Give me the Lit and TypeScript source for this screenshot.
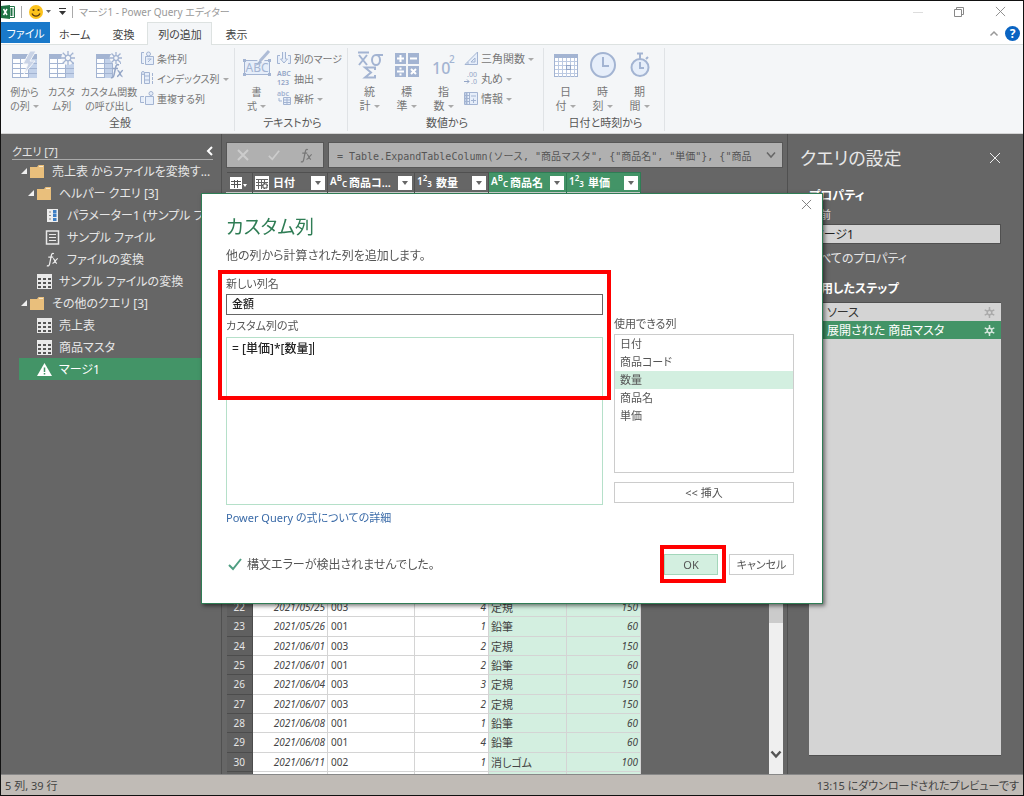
import { LitElement, html, svg, css } from "lit";
import { customElement } from "lit/decorators.js";
import { classMap } from "lit/directives/class-map.js";

const base = css`
  * { box-sizing: border-box; }
  button, input, textarea, select { font: inherit; color: inherit; margin: 0; border-radius: 0; outline: none; }
  button { background: none; border: 0; padding: 0; text-align: inherit; }
  svg { display: block; flex: none; overflow: visible; }
  a { text-decoration: none; }
`;

/* ---------- shared glyphs ---------- */
const cross = (size: number, color: string, w = 1) => html`
  <svg width=${size} height=${size} viewBox="0 0 12 12" fill="none" stroke=${color} stroke-width=${w}>
    <path d="M1 1 11 11M11 1 1 11" />
  </svg>`;
const check = (size: number, color: string, w = 2) => html`
  <svg width=${size} height=${size} viewBox="0 0 14 14" fill="none" stroke=${color} stroke-width=${w}>
    <path d="M1 8 5 12 13 2" />
  </svg>`;
const fx = (size: number, color: string) => html`
  <svg width=${size} height=${size} viewBox="0 0 16 16" fill="none" stroke=${color} stroke-width="1.3">
    <path d="M9.5 1.8C7.6.9 6.9 2.5 6.5 5L5 12.5C4.600 14.800 3.500 15.300 2 14.500M3.500 5.500H8.800" />
    <path d="M8.500 7C10.500 6.500 10.700 12.500 12.800 12.200M13.700 7C12 6.500 10 12.500 8 12.200" />
  </svg>`;

/* ---------- ribbon artwork ---------- */
const L = "#a3b4d2";
const F = "#e6eefa";
const sheet = (extra: unknown) => html`
  <svg width="30" height="30" viewBox="0 0 30 30">
    <rect x="2.500" y="5.500" width="24" height="22" fill="#fdfeff" stroke=${L} />
    <rect x="2" y="4" width="25" height="5" fill=${L} />
    <rect x="19" y="9" width="8" height="19" fill="#c3d2ea" />
    <path d="M3 13.500H27M3 18.500H27M3 23.500H27M10.500 9V28M18.500 9V28" stroke=${L} fill="none" />
    ${extra}
  </svg>`;
const burst = (x: number, y: number, r: number) => svg`
  <g transform="translate(${x} ${y})" stroke="#f4f6f9" stroke-width="4" fill="#f4f6f9"><circle r=${r * 0.7} /></g>
  <g transform="translate(${x} ${y})" stroke=${L} stroke-width="1.300" fill="#f4f6f9">
    <path d=${`M0 ${-r}V${r}M${-r} 0H${r}M${-r * 0.75} ${-r * 0.75}L${r * 0.75} ${r * 0.75}M${r * 0.75} ${-r * 0.75}L${-r * 0.75} ${r * 0.75}`} />
    <circle r=${r * 0.4} />
  </g>`;
const icons: Record<string, unknown> = {
  example: sheet(svg`<path d="M20 1 13 14H18L14 24 25 11H20L26 1Z" fill="#c9d3e6" stroke="#f4f6f9" />`),
  custom: sheet(burst(21, 8, 7)),
  invoke: html`
    <svg width="30" height="30" viewBox="0 0 30 30">
      <rect x="2.500" y="5.500" width="24" height="22" fill="#fdfeff" stroke=${L} />
      <rect x="2" y="4" width="25" height="5" fill=${L} />
      <rect x="10" y="9" width="8" height="19" fill="#c3d2ea" />
      <path d="M3 13.500H18M3 18.500H18M3 23.500H18M10.500 9V28M18.500 9V28" stroke=${L} fill="none" />
      <rect x="19" y="14" width="11" height="16" fill="#f4f6f9" />
      ${burst(22, 8, 6)}
      <g fill="none" stroke="#93a5c6" stroke-width="1.500">
        <path d="M25 15C23 14 22 15 21.500 18L20 25C19.600 27.500 18 28 17 27.500M18.500 18.500H24" />
        <path d="M23.500 20.500C26 20 26 27 28.500 26.500M29 20.500C27 20 25.500 26.500 23 26.500" />
      </g>
    </svg>`,
  format: html`
    <svg width="30" height="30" viewBox="0 0 30 30">
      <rect x="2.500" y="10.500" width="25" height="14" fill=${F} stroke=${L} />
      <g fill=${L}><rect x="1" y="9" width="3" height="3" /><rect x="26" y="9" width="3" height="3" /><rect x="1" y="23" width="3" height="3" /><rect x="26" y="23" width="3" height="3" /></g>
      <text x="15" y="22" font-size="12" text-anchor="middle" fill=${L}>ABC</text>
      <path d="M27 1 17 12" stroke="#f4f6f9" stroke-width="6" /><path d="M27 1 18 11" stroke="#aebcd6" stroke-width="3" /><path d="M18 10 13 16 20 13Z" fill=${L} />
    </svg>`,
  stats: html`
    <svg width="30" height="30" viewBox="0 0 30 30" fill="none" stroke=${L} stroke-width="2">
      <path d="M3 2.500H14M4 5 12 15M12 5 4 15" />
      <path d="M28 5H21" /><ellipse cx="21" cy="10" rx="4" ry="5" />
      <path d="M20 20V17.500H10L16 22.500 10 27.500H20V25" />
    </svg>`,
  standard: html`
    <svg width="30" height="30" viewBox="0 0 30 30">
      <path fill=${L} d="M3 3H14V14H3ZM16 3H27V14H16ZM3 16H14V27H3ZM16 16H27V27H16Z" />
      <path fill="none" stroke="#fff" stroke-width="2" d="M5 8.500H12M8.500 5V12M18 8.500H25M5 21.500H12M8.500 17.500V19.500M8.500 23.500V25.500M19 19 24 24M24 19 19 24" />
    </svg>`,
  power: html`
    <svg width="30" height="30" viewBox="0 0 30 30" fill=${L} font-weight="500">
      <text x="3" y="24" font-size="16">10</text><text x="20" y="13" font-size="10">2</text>
    </svg>`,
  date: html`
    <svg width="30" height="30" viewBox="0 0 30 30">
      <rect x="3.500" y="4.500" width="23" height="22" fill="#fff" stroke=${L} />
      <rect x="3" y="4" width="24" height="4" fill=${L} />
      <path d="M4 11.500H26M4 15.500H26M4 19.500H26M4 23.500H26M7.500 8V27M11.500 8V27M15.500 8V27M19.500 8V27M23.500 8V27" stroke="#bccae2" fill="none" />
      <rect x="15.500" y="15.500" width="4" height="4" fill=${F} stroke="#93a5c6" />
    </svg>`,
  time: html`
    <svg width="30" height="30" viewBox="0 0 30 30" fill="none" stroke=${L} stroke-width="2">
      <circle cx="15" cy="15" r="12" fill=${F} /><path d="M15 7V16H21" />
    </svg>`,
  duration: html`
    <svg width="30" height="30" viewBox="0 0 30 30" fill="none" stroke=${L} stroke-width="2">
      <circle cx="15" cy="17.500" r="8.500" fill=${F} /><path d="M15 12V18H19M12 3.500H18M15 4V9M21 9 23 7" />
    </svg>`,
  cond: html`
    <svg width="14" height="14" viewBox="0 0 14 14" fill=${F} stroke=${L}>
      <path d="M4 1.500H1.500V12.500H4" /><circle cx="8.500" cy="3" r="2" /><path d="M5.500 5.500H13.500V13.500H5.500ZM7.500 8H11.500M8 11 11 8" />
    </svg>`,
  index: html`
    <svg width="14" height="14" viewBox="0 0 14 14" fill=${F} stroke=${L}>
      <path d="M4.500 1.500H9.500V12.500H4.500ZM4.500 5H9.500M4.500 9H9.500M1.500 2V13M12.500 2V5M12.500 6V9M12.500 10V13" /><circle cx="3" cy="2" r="1.500" />
    </svg>`,
  dup: html`
    <svg width="14" height="14" viewBox="0 0 14 14" fill=${F} stroke=${L}>
      <path d="M4 5.500H.5V11.500H4M5.500 5.500H13.500V13.500H5.500Z" /><circle cx="11" cy="2.500" r="2" />
    </svg>`,
  merge: html`
    <svg width="14" height="14" viewBox="0 0 14 14" fill=${F} stroke=${L}>
      <path d="M3 4.500H.5V12.500H3M11 4.500H13.500V12.500H11M5.500 1V8H3.500L7 12 10.500 8H8.500V1" />
    </svg>`,
  extract: html`
    <svg width="14" height="14" viewBox="0 0 14 14" fill="#93a5c6" font-weight="600">
      <text x="0" y="5" font-size="7">ABC</text><text x="0" y="14" font-size="7">123</text>
    </svg>`,
  parse: html`
    <svg width="14" height="14" viewBox="0 0 14 14" fill=${L}>
      <text x="0" y="5" font-size="7" font-weight="600">abc</text>
      <path d="M6.500 6.500H13.500V13.500H6.500ZM7 9H13M7 11.500H13M10 7V13M2 7V10H5" fill=${F} stroke=${L} />
    </svg>`,
  trig: html`
    <svg width="14" height="14" viewBox="0 0 14 14" fill=${F} stroke=${L}>
      <path d="M1 13.500H13.500V1ZM7 11H11V7ZM4 13V11" />
    </svg>`,
  round: html`
    <svg width="14" height="14" viewBox="0 0 14 14" fill="#93a5c6">
      <text x="3" y="6" font-size="7">.00</text><text x="7" y="13" font-size="7">.0</text>
      <path d="M0 10.500H5M3 8.500 5 10.500 3 12.500" fill="none" stroke="#93a5c6" />
    </svg>`,
  info: html`
    <svg width="14" height="14" viewBox="0 0 14 14" fill=${F} stroke=${L}>
      <path d="M.5 1.500H13.500V13.500H.5ZM5.500 1.500V13.500M.5 4.500H5M.5 7.500H5M.5 10.500H5M7 5H12M7 9.500H12M9.500 7.500V12" /><path d="M2.500 2V13" stroke-width="2" />
    </svg>`,
};

type Tile = { icon: string; lines: [string, string]; menu?: boolean; wide?: boolean };
type Small = { icon: string; label: string; menu?: boolean };
type Group = { title: string; tiles: Tile[]; small: Small[]; cls: string };

const groups: Group[] = [
  {
    title: "全般", cls: "general",
    tiles: [
      { icon: "example", lines: ["例から", "の列"], menu: true },
      { icon: "custom", lines: ["カスタ", "ム列"] },
      { icon: "invoke", lines: ["カスタム関数", "の呼び出し"], wide: true },
    ],
    small: [
      { icon: "cond", label: "条件列" },
      { icon: "index", label: "インデックス列", menu: true },
      { icon: "dup", label: "重複する列" },
    ],
  },
  {
    title: "テキストから", cls: "text",
    tiles: [{ icon: "format", lines: ["書", "式"], menu: true }],
    small: [
      { icon: "merge", label: "列のマージ" },
      { icon: "extract", label: "抽出", menu: true },
      { icon: "parse", label: "解析", menu: true },
    ],
  },
  {
    title: "数値から", cls: "number",
    tiles: [
      { icon: "stats", lines: ["統", "計"], menu: true },
      { icon: "standard", lines: ["標", "準"], menu: true },
      { icon: "power", lines: ["指", "数"], menu: true },
    ],
    small: [
      { icon: "trig", label: "三角関数", menu: true },
      { icon: "round", label: "丸め", menu: true },
      { icon: "info", label: "情報", menu: true },
    ],
  },
  {
    title: "日付と時刻から", cls: "datetime",
    tiles: [
      { icon: "date", lines: ["日", "付"], menu: true },
      { icon: "time", lines: ["時", "刻"], menu: true },
      { icon: "duration", lines: ["期", "間"], menu: true },
    ],
    small: [],
  },
];

@customElement("pq-ribbon")
export class PqRibbon extends LitElement {
  static styles = [base, css`
    :host { display: block; background: #fff; color: #444; font-size: 11px; }
    .title { display: flex; align-items: center; height: 21px; padding: 0 17px 0 0; color: #999; }
    .sep { width: 1px; height: 12px; background: #aaa; margin: 0 6px; }
    .name { font-size: 10px; }
    .quick { display: flex; align-items: center; gap: 2px; }
    .qat { margin-left: 8px; }
    .win { display: flex; align-items: center; gap: 31px; margin-left: auto; }
    .tabs { display: flex; height: 23px; align-items: stretch; border-bottom: 1px solid #dde2e1; }
    .tab { min-width: 48px; padding: 0 8px; text-align: center; border: 1px solid transparent; border-bottom: 0; }
    .tab.file { background: #1979ca; color: #fff; width: 49px; padding: 0; margin-bottom: 1px; }
    .tab.active { min-width: 65px; background: #f4f6f8; border-color: #dde2e1; margin-bottom: -1px; }
    .help { display: flex; align-items: center; gap: 7px; margin-left: auto; padding-right: 3px; }
    .body { display: flex; height: 89px; padding: 3px 0 2px 2px; background: #f4f6f8; border-bottom: 1px solid #d4d4d4; }
    .group { display: flex; flex-direction: column; border-right: 1px solid #e0e3e6; padding-left: 3px; }
    .items { display: flex; flex: 1; }
    .general { width: 232px; }
    .general .items, .text .items { font-size: 10px; }
    .text { width: 113px; }
    .number { width: 196px; }
    .datetime { width: 121px; }
    .caption { text-align: center; line-height: 17px; color: #555; }
    .tile { display: flex; flex-direction: column; align-items: center; width: 37px; padding-top: 2px; color: #777; line-height: 14px; }
    .tile.wide { width: 58px; }
    .lines { margin-top: 5px; text-align: center; white-space: nowrap; }
    .caret::after { content: ""; display: inline-block; border: 3px solid transparent; border-top-color: #aaa; border-bottom: 0; margin-left: 3px; vertical-align: 2px; }
    .small { display: flex; flex-direction: column; padding-left: 2px; }
    .mini { display: flex; align-items: center; gap: 3px; height: 20px; color: #777; white-space: nowrap; }
  `];

  private tile(t: Tile) {
    return html`<button class=${classMap({ tile: true, wide: !!t.wide })}>
      ${icons[t.icon]}
      <span class="lines">${t.lines[0]}<br /><span class=${t.menu ? "caret" : ""}>${t.lines[1]}</span></span>
    </button>`;
  }

  render() {
    return html`
      <div class="title">
        <svg width="14" height="14" viewBox="0 0 14 14">
          <path d="M7 1.500H13.500V12.500H7Z" fill="#fff" stroke="#217346" /><path d="M8 4H12.500M8 6H12.500M8 8H12.500M8 10H12.500M10.500 3V11" stroke="#217346" fill="none" />
          <path d="M0 1 9 0V14L0 13Z" fill="#1f7244" /><path d="M2.500 4 6 10M6 4 2.500 10" stroke="#fff" stroke-width="1.500" />
        </svg>
        <span class="sep"></span>
        <button class="quick" aria-label="スマイル">
          <svg width="16" height="16" viewBox="0 0 16 16">
            <circle cx="8" cy="8" r="7" fill="#fcc21b" /><circle cx="5.500" cy="6" r="1.100" fill="#5a3a10" /><circle cx="10.500" cy="6" r="1.100" fill="#5a3a10" />
            <path d="M4 9.500C5.500 13 10.500 13 12 9.500" fill="none" stroke="#5a3a10" stroke-width="1.300" />
          </svg>
          <svg width="5" height="3" viewBox="0 0 5 3"><path d="M0 0H5L2.500 3Z" fill="#666" /></svg>
        </button>
        <svg class="qat" width="7" height="7" viewBox="0 0 7 7"><path d="M0 .5H7" stroke="#333" /><path d="M0 3H7L3.500 7Z" fill="#333" /></svg>
        <span class="sep"></span>
        <span class="name">マージ1 - Power Query エディター</span>
        <div class="win">
          <svg width="10" height="10" viewBox="0 0 10 10"><path d="M0 5.500H10" stroke="#ddd" /></svg>
          <svg width="10" height="10" viewBox="0 0 10 10" fill="none" stroke="#888"><path d="M.5 2.500H7.500V9.500H.5ZM2.500 2.500V.5H9.500V7.500H7.500" /></svg>
          ${cross(11, "#888")}
        </div>
      </div>
      <nav class="tabs">
        <button class="tab file">ファイル</button>
        <button class="tab">ホーム</button>
        <button class="tab">変換</button>
        <button class="tab active">列の追加</button>
        <button class="tab">表示</button>
        <div class="help">
          <svg width="8" height="5" viewBox="0 0 8 5" fill="none" stroke="#999" stroke-width="1.500"><path d="M.5 4.500 4 1 7.500 4.500" /></svg>
          <svg width="15" height="15" viewBox="0 0 15 15"><circle cx="7.500" cy="7.500" r="7.500" fill="#0a64c2" /><text x="7.500" y="12" font-size="12" font-weight="700" text-anchor="middle" fill="#fff">?</text></svg>
        </div>
      </nav>
      <div class="body">
        ${groups.map((g) => html`
          <section class="group ${g.cls}">
            <div class="items">
              ${g.tiles.map((t) => this.tile(t))}
              ${g.small.length ? html`<div class="small">
                ${g.small.map((s) => html`<button class="mini">${icons[s.icon]}<span class=${s.menu ? "caret" : ""}>${s.label}</span></button>`)}
              </div>` : ""}
            </div>
            <div class="caption">${g.title}</div>
          </section>`)}
      </div>`;
  }
}

@customElement("pq-custom-column")
export class PqCustomColumn extends LitElement {
  static styles = [base, css`
    :host { display: block; position: relative; width: 622px; background: #fff; border: 1px solid #2f7d55; color: #555; font-size: 11px;
      padding: 21px 28px 28px 24px; box-shadow: 2px 2px 4px rgba(0, 0, 0, 0.5); }
    .close { position: absolute; right: 10px; top: 5px; }
    h2 { margin: 0; font-size: 19px; line-height: 24px; font-weight: 400; color: #2f7d55; }
    .lead { margin: 8px 0 0; font-size: 12px; line-height: 18px; }
    .cols { display: grid; grid-template-columns: 1fr 180px; gap: 11px; margin-top: 10px; }
    .left { display: flex; flex-direction: column; }
    .left label, .right label { line-height: 17px; }
    .name { height: 21px; margin-top: 2px; padding: 0 5px 3px; border: 1px solid #666; color: #222; font-weight: 500; }
    .second { margin-top: 2px; }
    .area { position: relative; display: flex; margin-top: 3px; }
    textarea { flex: 1; height: 168px; padding: 2px 5px; border: 1px solid #b5e0c9; resize: none; font-size: 12px; line-height: 18px; color: #222; font-weight: 500; }
    .caret { position: absolute; left: 87px; top: 5px; width: 1px; height: 13px; background: #222; }
    .right { display: flex; flex-direction: column; padding-top: 40px; }
    select { height: 139px; margin-top: 2px; border: 1px solid #ccc; padding: 0; background: #fff; overflow: hidden; }
    option { padding: 0 5px; line-height: 18px; min-height: 18px; color: #555; }
    option:checked { background: #d3efe0; color: #555; }
    .btn { height: 21px; border: 1px solid #ccc; text-align: center; background: #fff; }
    .insert { margin-top: 9px; }
    .link { display: inline-block; margin-top: 4px; line-height: 17px; color: #3b6ba8; }
    .foot { display: flex; align-items: center; margin-top: 28px; }
    .ok-msg { display: flex; align-items: center; gap: 5px; padding-left: 2px; font-size: 12px; }
    .actions { display: flex; gap: 11px; margin-left: auto; }
    .actions .ok { width: 54px; background: #d3efe0; border-color: #a3d6ba; }
    .actions .cancel { width: 65px; }
    .mark { position: absolute; border: 4px solid #f00; pointer-events: none; }
    .fields { left: 16px; top: 76px; width: 393px; height: 130px; }
    .confirm { right: 96px; bottom: 20px; width: 66px; height: 38px; }
  `];

  render() {
    const cols = ["日付", "商品コード", "数量", "商品名", "単価"];
    return html`
      <button class="close" aria-label="閉じる">${cross(11, "#777")}</button>
      <h2>カスタム列</h2>
      <p class="lead">他の列から計算された列を追加します。</p>
      <div class="cols">
        <div class="left">
          <label for="name">新しい列名</label>
          <input id="name" class="name" .value=${"金額"} />
          <label for="formula" class="second">カスタム列の式</label>
          <div class="area">
            <textarea id="formula" spellcheck="false" .value=${"= [単価]*[数量]"}></textarea>
            <span class="caret"></span>
          </div>
        </div>
        <div class="right">
          <label for="avail">使用できる列</label>
          <select id="avail" size="7">
            ${cols.map((c) => html`<option ?selected=${c === "数量"}>${c}</option>`)}
          </select>
          <button class="btn insert">&lt;&lt; 挿入</button>
        </div>
      </div>
      <a class="link" href="#">Power Query の式についての詳細</a>
      <div class="foot">
        <div class="ok-msg">${check(14, "#4f9e82")}<span>構文エラーが検出されませんでした。</span></div>
        <div class="actions"><button class="btn ok">OK</button><button class="btn cancel">キャンセル</button></div>
      </div>
      <span class="mark fields"></span>
      <span class="mark confirm"></span>`;
  }
}

type Node = { level: number; icon: "folder" | "param" | "text" | "fx" | "table" | "warn"; label: string; selected?: boolean };
const nodes: Node[] = [
  { level: 0, icon: "folder", label: "売上表 からファイルを変換す..." },
  { level: 1, icon: "folder", label: "ヘルパー クエリ [3]" },
  { level: 2, icon: "param", label: "パラメーター1 (サンプル フ..." },
  { level: 2, icon: "text", label: "サンプル ファイル" },
  { level: 2, icon: "fx", label: "ファイルの変換" },
  { level: 1, icon: "table", label: "サンプル ファイルの変換" },
  { level: 0, icon: "folder", label: "その他のクエリ [3]" },
  { level: 1, icon: "table", label: "売上表" },
  { level: 1, icon: "table", label: "商品マスタ" },
  { level: 1, icon: "warn", label: "マージ1", selected: true },
];
const grid = html`
  <svg width="15" height="15" viewBox="0 0 15 15"><rect width="15" height="15" fill="#e8e8e8" />
    <path fill="#555" d="M1 4H4V6H1ZM6 4H9V6H6ZM11 4H14V6H11ZM1 8H4V10H1ZM6 8H9V10H6ZM11 8H14V10H11ZM1 12H4V14H1ZM6 12H9V14H6ZM11 12H14V14H11Z" /></svg>`;
const treeIcons = {
  folder: html`<svg width="15" height="13" viewBox="0 0 15 13"><path d="M0 2H7L8.500 0H14V13H0Z" fill="#e9bf7c" /><path d="M9 1.500H13" stroke="#f8e6c8" /></svg>`,
  param: html`<svg width="15" height="13" viewBox="0 0 15 13"><rect x="2" width="11" height="13" fill="#eee" /><path d="M4 3H6M4 6.500H6M4 10H6" stroke="#888" /><path d="M8 1H11.500V4.500H8ZM8 5H11.500V8H8ZM8 9H11.500V12H8Z" fill="#3f7fc4" /></svg>`,
  text: html`<svg width="15" height="15" viewBox="0 0 15 15" fill="none" stroke="#e8e8e8"><path d="M1.500 1H13.500V14H1.500Z" stroke-width="1.500" /><path d="M4 4.500H11M4 7.500H11M4 10.500H11" /></svg>`,
  fx: fx(15, "#f0f0f0"),
  table: grid,
  warn: html`<svg width="15" height="13" viewBox="0 0 15 13"><path d="M7.500 0 15 13H0Z" fill="#fff" /><path d="M7.500 4.500V9M7.500 10V11.500" stroke="#439467" stroke-width="1.500" /></svg>`,
};

const rows: [number, string, string, number, string, number][] = [
  [22, "2021/05/25", "003", 4, "定規", 150],
  [23, "2021/05/26", "001", 1, "鉛筆", 60],
  [24, "2021/06/01", "003", 2, "定規", 150],
  [25, "2021/06/01", "001", 2, "鉛筆", 60],
  [26, "2021/06/04", "003", 3, "定規", 150],
  [27, "2021/06/07", "003", 2, "定規", 150],
  [28, "2021/06/08", "001", 1, "鉛筆", 60],
  [29, "2021/06/08", "001", 4, "鉛筆", 60],
  [30, "2021/06/11", "002", 1, "消しゴム", 100],
];

@customElement("app-root")
export class AppRoot extends LitElement {
  static styles = [base, css`
    :host { display: flex; flex-direction: column; height: 100vh; box-sizing: border-box; border: 1px solid #111;
      font-family: "Noto Sans", "Noto Sans CJK JP", sans-serif; font-feature-settings: "palt"; font-size: 11px; color: #444; overflow: hidden; }
    .main { flex: 1; min-height: 0; display: flex; background: #666; color: #e6e6e6; }

    .queries { width: 221px; border-right: 1px solid #505050; overflow: hidden; }
    .qhead { display: flex; align-items: center; justify-content: space-between; height: 18px; margin: 8px 8px 0 11px; border-bottom: 1px solid #aaa; }
    ul, ol { list-style: none; margin: 0; padding: 0; }
    .node { display: flex; align-items: center; gap: 7px; height: 22px; margin-left: 18px; font-size: 12px; white-space: nowrap; }
    .node.l0 { padding-left: 2px; }
    .node.l1 { padding-left: 9px; }
    .node.l2 { padding-left: 26px; }
    .node.leaf.l1 { padding-left: 18px; }
    .node.selected { background: #439467; color: #fff; }
    .tw { width: 6px; height: 6px; margin-right: -4px; }

    .center { flex: 1; min-width: 0; display: flex; flex-direction: column; padding: 8px 4px 0; }
    .bar { display: flex; gap: 4px; height: 26px; margin-bottom: 4px; }
    .tools { width: 98px; display: flex; align-items: center; justify-content: space-around; background: #b0b0b0; border: 1px solid #575757; }
    .formula { flex: 1; min-width: 0; display: flex; align-items: center; background: #b0b0b0; border: 1px solid #575757; padding: 0 6px 0 8px; }
    .formula input { flex: 1; min-width: 0; height: 22px; border: 0; padding: 0; background: none; color: #555; font-family: "DejaVu Sans Mono", "Noto Sans CJK JP", monospace; font-size: 10px; font-feature-settings: normal; }
    .formula .more { margin-left: 12px; }
    .data { flex: 1; min-height: 0; display: flex; justify-content: space-between; overflow: hidden; }
    table { border-collapse: collapse; table-layout: fixed; width: 414px; height: max-content; color: #444; font-size: 10px; }
    th, td { padding: 0 3px; overflow: hidden; white-space: nowrap; line-height: 17px; }
    thead th { height: 20px; padding: 0 2px; background: #666; color: #fff; border-right: 1px solid #505050; border-top: 1px solid #505050; text-align: left; font-size: 11px; font-weight: 600; }
    thead th.sel { background: #439467; border-color: #2f7d55; }
    .h { display: flex; align-items: center; gap: 4px; height: 18px; }
    .h .t { flex: 1; min-width: 0; overflow: hidden; }
    .type { display: flex; width: 15px; font-size: 10px; font-weight: 600; line-height: 10px; }
    .type sup, .type sub { font-size: 8px; vertical-align: baseline; }
    .type sup { margin-top: -3px; }
    .type sub { margin-top: 3px; }
    .dd { width: 14px; height: 14px; display: flex; align-items: center; justify-content: center; background: #fff; }
    .gap { height: 405px; background: #fff; }
    tbody tr { height: 19px; }
    tbody tr:nth-child(3n) { height: 20px; }
    tbody td { background: #fff; border: 1px solid #d4d4d4; }
    tbody th { background: #606060; color: #e6e6e6; font-weight: 400; border: 1px solid #4c4c4c; border-left: 0; }
    tbody td.i { font-style: italic; text-align: right; padding-right: 2px; }
    tbody td.s { background: #d3efe0; }
    tbody td.jp { font-size: 11px; padding-left: 2px; }
    .scroll { width: 14px; margin-top: 22px; background: #efefef; display: flex; flex-direction: column; align-items: center; justify-content: space-between; padding-bottom: 15px; }
    .thumb { width: 14px; height: 429px; background: #cbcbcb; }

    .settings { width: 236px; display: flex; flex-direction: column; border-left: 1px solid #505050; padding: 12px 22px 18px 21px; }
    .stitle { display: flex; align-items: center; justify-content: space-between; margin-left: -9px; }
    .stitle h2 { margin: 0; font-size: 18px; line-height: 24px; font-weight: 400; }
    h3 { margin: 17px 0 0; font-size: 12px; line-height: 18px; font-weight: 700; color: #fff; }
    .settings label { line-height: 17px; margin-top: 1px; }
    .settings input { height: 20px; margin-top: 1px; padding: 0 3px; border: 1px solid #505050; background: #d4d4d4; color: #222; font-size: 12px; width: 100%; }
    .all { margin-top: 6px; line-height: 17px; font-size: 12px; color: #e6e6e6; }
    .steps-h { margin-top: 13px; }
    .steps { flex: 1; margin-top: 4px; background: #d4d4d4; border: 1px solid #505050; border-width: 1px 0; color: #333; font-size: 12px; }
    .step { display: grid; grid-template-columns: 15px 1fr auto; align-items: center; height: 18px; padding: 0 6px 0 3px; }
    .step.on { background: #439467; color: #fff; }

    .status { display: flex; align-items: center; justify-content: space-between; height: 21px; padding: 0 4px; background: #c0bbb6; border-top: 1px solid #888; color: #444; }
    .overlay { position: fixed; inset: 0; display: flex; align-items: center; justify-content: center; }
  `];

  private node(n: Node) {
    const folder = n.icon === "folder";
    return html`<li class=${classMap({ node: true, ["l" + n.level]: true, leaf: !folder, selected: !!n.selected })}>
      ${folder ? html`<svg class="tw" viewBox="0 0 6 6"><path d="M6 0V6H0Z" fill="#f0f0f0" /></svg>` : ""}
      ${treeIcons[n.icon]}<span>${n.label}</span>
    </li>`;
  }

  private head(type: unknown, label: string, sel = false) {
    return html`<th class=${sel ? "sel" : ""}><div class="h">
      ${type}<span class="t">${label}</span>
      <button class="dd" aria-label="フィルター"><svg width="6" height="4" viewBox="0 0 6 4"><path d="M0 0H6L3 4Z" fill="#666" /></svg></button>
    </div></th>`;
  }

  render() {
    const abc = html`<span class="type">A<sup>B</sup><sub>C</sub></span>`;
    const num = html`<span class="type">1<sup>2</sup><sub>3</sub></span>`;
    const gear = (c: string) => html`<svg width="11" height="11" viewBox="0 0 11 11" fill="none" stroke=${c} stroke-width="1.500"><path d="M5.500 0V3M5.500 8V11M.7 2.800 3.300 4.200M7.700 6.800 10.300 8.200M.7 8.200 3.300 6.800M7.700 4.200 10.300 2.800" /><circle cx="5.500" cy="5.500" r="2.300" /></svg>`;
    return html`
      <pq-ribbon></pq-ribbon>
      <div class="main">
        <aside class="queries">
          <div class="qhead"><span>クエリ [7]</span>
            <svg width="7" height="10" viewBox="0 0 7 10" fill="none" stroke="#fff" stroke-width="2"><path d="M6 1 2 5 6 9" /></svg></div>
          <ul>${nodes.map((n) => this.node(n))}</ul>
        </aside>
        <section class="center">
          <div class="bar">
            <div class="tools">${cross(12, "#ccc", 2)}${check(12, "#ccc")}${fx(15, "#777")}</div>
            <div class="formula">
              <input aria-label="数式" .value=${'= Table.ExpandTableColumn(ソース, "商品マスタ", {"商品名", "単価"}, {"商品'} />
              <svg class="more" width="10" height="6" viewBox="0 0 10 6" fill="none" stroke="#666" stroke-width="1.500"><path d="M1 .5 5 5 9 .5" /></svg>
            </div>
          </div>
          <div class="data">
            <table>
              <colgroup><col style="width:26px" /><col style="width:75px" /><col style="width:87px" /><col style="width:74px" /><col style="width:78px" /><col style="width:74px" /></colgroup>
              <thead><tr>
                <th><div class="h"><svg width="18" height="12" viewBox="0 0 18 12"><rect width="12" height="12" x="1" fill="#fff" /><path d="M2 4.500H12M2 7.500H12M5.500 3V11M8.500 3V11" stroke="#555" /><path d="M14 7H18L16 10Z" fill="#fff" /></svg></div></th>
                ${this.head(html`<svg width="14" height="14" viewBox="0 0 14 14"><rect width="14" height="14" fill="#fff" /><path d="M1 3.500H13M1 6.500H13M1 9.500H13M3.500 4V13M6.500 4V13M9.500 4V13" stroke="#666" /><path d="M8 8H12V12H8Z" fill="#fff" stroke="#444" /></svg>`, "日付")}
                ${this.head(abc, "商品コ...")}
                ${this.head(num, "数量")}
                ${this.head(abc, "商品名", true)}
                ${this.head(num, "単価", true)}
              </tr></thead>
              <tbody>
                <tr class="gap"><td colspan="6" class="gap"></td></tr>
                ${rows.map((r) => html`<tr>
                  <th scope="row">${r[0]}</th><td class="i">${r[1]}</td><td>${r[2]}</td><td class="i">${r[3]}</td><td class="s jp">${r[4]}</td><td class="s i">${r[5]}</td>
                </tr>`)}
                <tr><th></th><td></td><td></td><td></td><td class="s"></td><td class="s"></td></tr>
              </tbody>
            </table>
            <div class="scroll"><div class="thumb"></div>
              <svg width="12" height="9" viewBox="0 0 12 9" fill="none" stroke="#555" stroke-width="2.500"><path d="M1.500 1.500 6 6.500 10.500 1.500" /></svg></div>
          </div>
        </section>
        <aside class="settings">
          <div class="stitle"><h2>クエリの設定</h2><button aria-label="閉じる">${cross(12, "#eee", 1)}</button></div>
          <h3>プロパティ</h3>
          <label for="qname">名前</label>
          <input id="qname" .value=${"マージ1"} />
          <a class="all" href="#">すべてのプロパティ</a>
          <h3 class="steps-h">適用したステップ</h3>
          <ol class="steps">
            <li class="step"><span></span><span>ソース</span>${gear("#aaa")}</li>
            <li class="step on"><button aria-label="削除">${cross(9, "#fff", 2)}</button><span>展開された 商品マスタ</span>${gear("#d8e8df")}</li>
          </ol>
        </aside>
      </div>
      <footer class="status"><span>5 列, 39 行</span><span>13:15 にダウンロードされたプレビューです</span></footer>
      <div class="overlay"><pq-custom-column></pq-custom-column></div>`;
  }
}
